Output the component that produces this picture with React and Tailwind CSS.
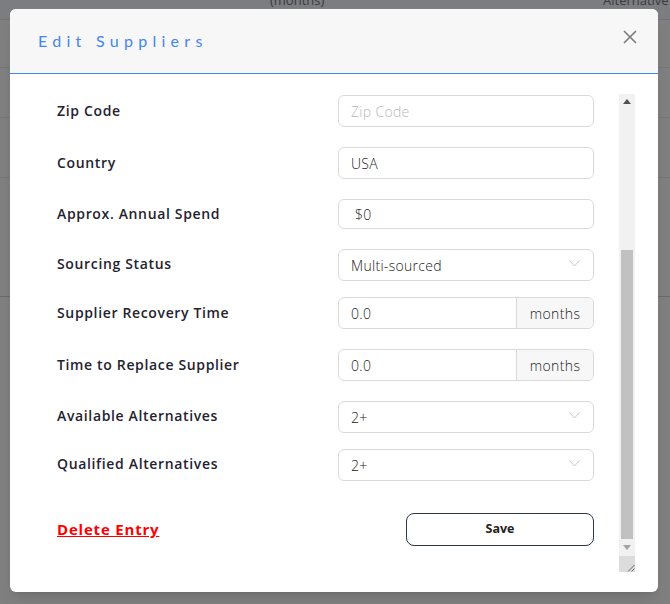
import { useRef, useLayoutEffect } from "react";

const labelCls = "w-[281px] shrink-0 -mt-px text-[14px] font-semibold text-[#1f2330] tracking-[0.65px]";
const inputCls =
  "w-[256px] h-[32px] rounded-md border border-[#d9d9d9] bg-white px-3 text-[14px] font-light text-[#1a1a1a] tracking-[0.3px] outline-none placeholder:text-[#b8b8b8]";

const TextRow = ({ label, value, placeholder, extra = "" }) => (
  <div className="flex items-center mb-5">
    <div className={labelCls}>{label}</div>
    <input type="text" defaultValue={value} placeholder={placeholder} className={`${inputCls} ${extra}`} />
  </div>
);

const MonthsRow = ({ label, value }) => (
  <div className="flex items-center mb-5">
    <div className={labelCls}>{label}</div>
    <div className="flex w-[256px] h-[32px] rounded-md border border-[#d9d9d9] overflow-hidden">
      <input
        type="text"
        defaultValue={value}
        className="w-[177px] h-full px-3 text-[14px] font-light text-[#1a1a1a] tracking-[0.3px] outline-none"
      />
      <div className="flex-1 flex items-center justify-center border-l border-[#d9d9d9] bg-[#f7f7f7] text-[14px] font-light tracking-[0.4px] text-[#1a1a1a]">
        months
      </div>
    </div>
  </div>
);

const SelectRow = ({ label, value, options }) => (
  <div className="flex items-center mb-4">
    <div className={`${labelCls} !-mt-1`}>{label}</div>
    <div className="relative w-[256px] h-[32px]">
      <select
        defaultValue={value}
        className="appearance-none w-full h-full rounded-md border border-[#d9d9d9] bg-white pl-3 pr-8 text-[14px] font-light text-[#1a1a1a] tracking-[0.3px] outline-none"
      >
        {options.map((o) => (
          <option key={o}>{o}</option>
        ))}
      </select>
      <svg className="pointer-events-none absolute right-[14px] top-[11px]" width="11" height="7" viewBox="0 0 11 7" fill="none">
        <path d="M0.5 0.5 L5.5 6 L10.5 0.5" stroke="#c8c8c8" strokeWidth="1" />
      </svg>
    </div>
  </div>
);

const ScrollBar = () => (
  <div className="w-[16px] h-[478px] flex flex-col bg-[#f1f1f1]">
    <div className="h-[15px] flex items-center justify-center">
      <svg width="8" height="5" viewBox="0 0 8 5">
        <path d="M0 5 L4 0 L8 5 Z" fill="#505050" />
      </svg>
    </div>
    <div className="flex-1 flex flex-col px-[2px]">
      <div className="h-[141px]" />
      <div className="flex-1 bg-[#c1c1c1]" />
    </div>
    <div className="h-[17px] flex items-center justify-center">
      <svg width="8" height="5" viewBox="0 0 8 5">
        <path d="M0 0 L8 0 L4 5 Z" fill="#a3a3a3" />
      </svg>
    </div>
    <div className="h-[16px] bg-[#dcdcdc] flex items-end justify-end">
      <svg width="10" height="10" viewBox="0 0 10 10">
        <path d="M9.5 3 L3 9.5 M9.5 6.5 L6.5 9.5" stroke="#5a5a5a" strokeWidth="0.9" />
      </svg>
    </div>
  </div>
);

const App = () => {
  const scrollRef = useRef(null);

  useLayoutEffect(() => {
    if (scrollRef.current) {
      scrollRef.current.scrollTop = scrollRef.current.scrollHeight;
    }
  }, []);

  return (
    <div
      className="w-[670px] h-[604px] overflow-hidden bg-[#808080] relative"
      style={{ fontFamily: "'Open Sans', 'Liberation Sans', sans-serif" }}
    >
      {/* Page behind the overlay */}
      <div className="h-[20px] bg-[#7c7d81] border-b border-[#737373] relative">
        <span className="absolute left-[270px] -top-[9px] text-[13px] text-[#3a3a3a]">(months)</span>
        <span className="absolute left-[603px] -top-[9px] text-[13px] text-[#3a3a3a]">Alternative</span>
      </div>
      <div className="h-[48px] border-b border-[#777]" />
      <div className="h-[50px] border-b border-[#777]" />
      <div className="h-[60px] border-b border-[#777]" />
      <div className="h-[119px] border-b border-[#6a6a6a]" />

      {/* Modal */}
      <div className="absolute left-[10px] top-[9px] w-[648px] h-[583px] rounded-md bg-white shadow-lg flex flex-col overflow-hidden">
        <div className="h-[65px] shrink-0 bg-[#f7f7f7] border-b border-[#4285f4] flex justify-between pl-[28px] pr-[21px]">
          <h2 className="mt-[20px] text-[16px] tracking-[0.33em] text-[#4285f4]" style={{ fontFamily: "Lato, sans-serif" }}>
            Edit Suppliers
          </h2>
          <button className="mt-[21px] w-[14px] h-[14px]">
            <svg width="14" height="14" viewBox="0 0 14 14">
              <path d="M1 1 L13 13 M13 1 L1 13" stroke="#7a7a7a" strokeWidth="1.6" />
            </svg>
          </button>
        </div>

        <div className="px-[23px] pt-[20px] flex">
          <div ref={scrollRef} className="w-[586px] h-[478px] overflow-hidden pl-[24px] pr-[25px] pt-[25px] pb-[26px]">
            <TextRow label="Supplier Name" value="Acme Components" />
            <TextRow label="Address" value="123 Main St" />
            <TextRow label="City" value="Springfield" />
            <TextRow label="State" value="IL" />
            <TextRow label="Zip Code" placeholder="Zip Code" />
            <TextRow label="Country" value="USA" />
            <TextRow label="Approx. Annual Spend" value="$0" extra="!h-[30px] !pl-4" />
            <SelectRow label="Sourcing Status" value="Multi-sourced" options={["Single-sourced", "Multi-sourced"]} />
            <MonthsRow label="Supplier Recovery Time" value="0.0" />
            <MonthsRow label="Time to Replace Supplier" value="0.0" />
            <SelectRow label="Available Alternatives" value="2+" options={["0", "1", "2+"]} />
            <SelectRow label="Qualified Alternatives" value="2+" options={["0", "1", "2+"]} />

            <div className="flex items-center justify-between mt-8">
              <a href="#" className="text-[15px] font-bold text-[#ff0000] underline tracking-[0.8px]">
                Delete Entry
              </a>
              <button className="w-[188px] h-[33px] rounded-lg border border-[#2d3748] text-[12.5px] font-bold text-[#222]">
                Save
              </button>
            </div>
          </div>
          <ScrollBar />
        </div>
      </div>
    </div>
  );
};

export default App;
